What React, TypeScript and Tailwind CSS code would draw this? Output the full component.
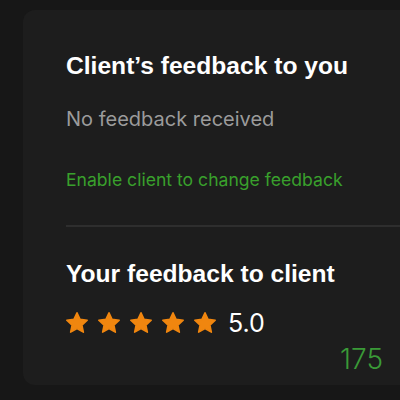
import React from "react";

function Star() {
  return (
    <svg width="24" height="24" viewBox="0 0 24 24" aria-hidden="true">
      <path
        d="M12 1.8l3.05 6.55 7.15.85-5.3 4.9 1.45 7.05L12 17.6l-6.35 3.55 1.45-7.05-5.3-4.9 7.15-.85z"
        fill="#f0860f"
        stroke="#f0860f"
        strokeWidth="1.6"
        strokeLinejoin="round"
      />
    </svg>
  );
}

const sans = '"Liberation Sans", Arial, sans-serif';
const ui = 'Inter, "Liberation Sans", Arial, sans-serif';

export default function App() {
  return (
    <div
      className="w-[400px] h-[400px] bg-[#171717] overflow-hidden pt-[10px] pl-[23px]"
      style={{ fontFamily: sans }}
    >
      <div className="w-[420px] h-[375px] bg-[#1d1d1d] rounded-[12px] pl-[43px] pt-[41px] relative">
        <h2 className="text-[24.6px] leading-[30px] font-bold text-white">
          Client’s feedback to you
        </h2>
        <p
          className="mt-[26px] text-[20px] leading-[24px] text-[#9b9b9b]"
          style={{ fontFamily: ui }}
        >
          No feedback received
        </p>
        <p
          className="mt-[38px] text-[17.6px] leading-[22px] text-[#39a02c]"
          style={{ fontFamily: ui }}
        >
          Enable client to change feedback
        </p>
        <div className="mt-[34px] h-[2px] bg-[#2e2e2e]" />
        <h2 className="mt-[32px] text-[24.6px] leading-[30px] font-bold text-white">
          Your feedback to client
        </h2>
        <div className="mt-[19px] flex items-center h-[30px]">
          <div className="flex gap-[8px] -ml-[1px]">
            <Star />
            <Star />
            <Star />
            <Star />
            <Star />
          </div>
          <span
            className="ml-[11px] text-[25px] leading-[30px] text-white"
            style={{ fontFamily: ui }}
          >
            5.0
          </span>
        </div>
        <div
          className="absolute left-[317px] top-[333px] text-[28px] leading-[32px] font-light text-[#3a9a37]"
          style={{ fontFamily: ui }}
        >
          175
        </div>
      </div>
    </div>
  );
}
